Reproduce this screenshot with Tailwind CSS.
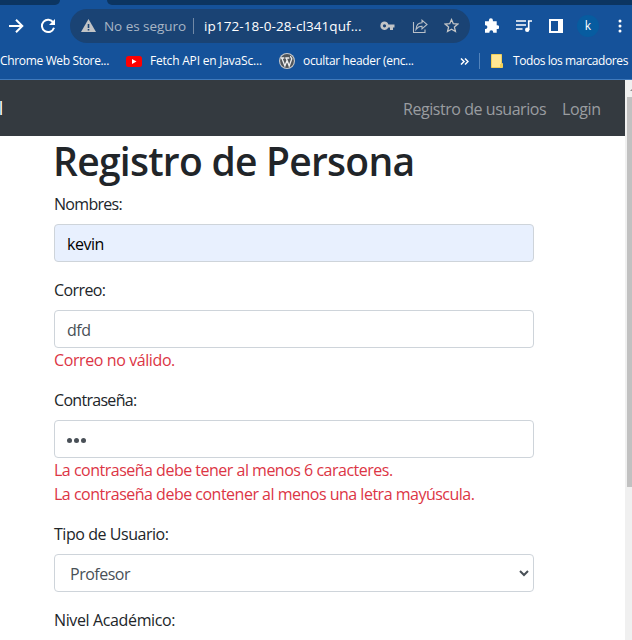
<!DOCTYPE html>
<html lang="es">
<head>
<meta charset="utf-8">
<title>Registro de Persona</title>
<script src="https://cdn.jsdelivr.net/npm/@tailwindcss/browser@4"></script>
</head>
<body class="w-[632px] h-[640px] overflow-hidden bg-white font-['Open_Sans','Noto_Sans',sans-serif] text-[#212529]">
<header class="h-20 flex flex-col bg-[#15529a] border-b border-[#3f79bb] text-white">
  <div class="flex h-[5px] shrink-0 justify-between">
    <div class="w-[60px] bg-[#0c3561] rounded-br-[5px]"></div>
    <div class="w-[525px] bg-[#0c3561] rounded-bl-[5px]"></div>
  </div>
  <div class="flex h-[42px] shrink-0 items-center">
    <svg class="w-4 h-4 ml-2" viewBox="0 0 16 16" fill="none" stroke="#fff" stroke-width="2"><path d="M1 8h13M8 1.700 14.300 8 8 14.300"/></svg>
    <svg class="w-4 h-4 ml-4" viewBox="0 0 16 16"><path d="M13.300 4.500A6.200 6.200 0 1 0 14 9.800" fill="none" stroke="#fff" stroke-width="2"/><path d="M15 1v6H9z" fill="#fff"/></svg>
    <div class="flex items-center w-[400px] h-[34px] ml-[14px] rounded-full bg-[#1a4374]">
      <svg class="w-[15px] h-[14px] ml-[11px]" viewBox="0 0 15 14"><path d="M7.500 0 15 13H0z" fill="#c2c4c6"/><path d="M6.700 5h1.600v4H6.700zM6.700 10h1.600v1.600H6.700z" fill="#1a4374"/></svg>
      <span class="ml-[8px] w-[89px] whitespace-nowrap text-[13.5px] tracking-[-0.05px] text-[#a8b5c5]">No es seguro</span>
      <span class="h-4 w-px bg-[#7189a6]"></span>
      <span class="ml-[10px] w-[176px] whitespace-nowrap text-[13.5px] tracking-[0.08px]">ip172-18-0-28-cl341quf...</span>
      <svg class="w-[15px] h-[10px]" viewBox="0 0 15 10" fill="#c2c4c6"><path fill-rule="evenodd" d="M4.500.500a4.200 4.200 0 1 0 3.900 6H10V9h3V6.500h1.500v-3H8.400A4.200 4.200 0 0 0 4.500.500zM4.500 3.200a1.600 1.600 0 1 1 0 3.200 1.600 1.600 0 0 1 0-3.200z"/></svg>
      <svg class="w-4 h-4 ml-[17px]" viewBox="0 0 16 16" fill="none" stroke="#b9c0c8" stroke-width="1.100"><path d="M1.500 4v10.500h11.500v-3M4 11.500c.3-4.800 2.600-6.700 6-6.700V2.200l5 4.300-5 4.300V8.300c-2.800-.1-4.600 1.200-6 3.200z"/></svg>
      <svg class="w-[15px] h-[15px] ml-[16px] -mt-px" viewBox="0 0 16 16" fill="none" stroke="#c2c4c6" stroke-width="1.400"><path d="m8 1.700 1.900 4.400 4.800.4-3.600 3.200 1.100 4.700L8 11.900l-4.200 2.500 1.100-4.700L1.300 6.500l4.800-.4z"/></svg>
    </div>
    <svg class="w-[15px] h-[15px] ml-[14px] -mt-px" viewBox="0 0 15 15" fill="#fff"><path d="M1 3.200h3.900V2.300a2 2 0 0 1 4 0v.9h3.800v4h.6a1.900 1.900 0 0 1 0 3.800h-.6v3.800H9.200v-.6a1.900 1.900 0 0 0-3.800 0v.6H1V11h.5a1.900 1.900 0 0 0 0-3.800H1z"/></svg>
    <svg class="w-4 h-[14px] ml-[17px]" viewBox="0 0 16 14"><path d="M0 2h10M0 6h10M0 10h6.500M12.700 11V2H16" fill="none" stroke="#fff" stroke-width="1.600"/><circle cx="11.200" cy="10.800" r="2.200" fill="#fff"/></svg>
    <svg class="w-[14px] h-[14px] ml-[17px]" viewBox="0 0 14 14"><path fill="#fff" fill-rule="evenodd" d="M0 0h14v14H0zM2 2v10h7V2z"/></svg>
    <span class="flex w-[22px] h-[22px] ml-[14px] items-center justify-center rounded-full bg-[#075ca0] text-xs">k</span>
    <svg class="w-1 h-[14px] ml-5 -translate-x-px" viewBox="0 0 4 14" fill="#fff"><circle cx="2" cy="2" r="1.500"/><circle cx="2" cy="7" r="1.500"/><circle cx="2" cy="12" r="1.500"/></svg>
  </div>
  <div class="flex h-7 items-center whitespace-nowrap text-[12px] tracking-[-0.34px]">
    <span class="w-[126px]">Chrome Web Store...</span>
    <svg class="w-4 h-[11px]" viewBox="0 0 16 11"><rect width="16" height="11" rx="2.500" fill="#f00"/><path d="m6 3 4.500 2.500L6 8z" fill="#fff"/></svg>
    <span class="w-[129px] ml-2 tracking-[-0.2px]">Fetch API en JavaSc...</span>
    <svg class="w-4 h-4" viewBox="0 0 16 16"><circle cx="8" cy="8" r="8" fill="#c8c8c8"/><circle cx="8" cy="8" r="6.900" fill="#50555a"/><path d="M1.800 5h3.500M6.300 5h4M2.800 5l3.100 8L8 7.500M7.200 5l3 8 2.600-7.200c-.2-1-1.500-1.500-1.200-2.800" fill="none" stroke="#eee" stroke-width="1.300"/></svg>
    <span class="w-[157px] ml-2">ocultar header (enc...</span>
    <svg class="w-[9px] h-[7px]" viewBox="0 0 9 7" fill="none" stroke="#fff" stroke-width="1.500"><path d="m1 .5 3 3-3 3M5 .5l3 3-3 3"/></svg>
    <span class="h-4 w-px ml-[10px] bg-[#5283bb]"></span>
    <svg class="w-3 h-[14px] ml-[11px]" viewBox="0 0 12 14"><path d="M.5.500h10v9h1v4H.5z" fill="#ffe694" stroke="#f0cf58"/><path d="M9 10h2v3H9z" fill="#f3cf55"/></svg>
    <span class="ml-[10px] tracking-[-0.42px]">Todos los marcadores</span>
  </div>
</header>
<div class="flex h-[560px]">
  <div class="w-[625px] shrink-0 overflow-hidden">
    <nav class="flex h-14 items-center bg-[#343a40] text-[#9a9da0]">
      <div class="flex w-[2px] h-[30px] items-center justify-center text-lg leading-[30px] text-white">l</div>
      <a class="ml-[401px] w-[159px] pt-px whitespace-nowrap text-base tracking-[-0.45px]">Registro de usuarios</a>
      <a class="pt-px text-base tracking-[-0.35px]">Login</a>
    </nav>
    <main class="w-[480px] ml-[54px] leading-6 tracking-[-0.5px]">
      <h1 class="mb-2 pt-px h-12 -ml-px whitespace-nowrap text-[39px] leading-[48px] font-semibold tracking-[-0.74px]">Registro de Persona</h1>
      <div class="mb-4">
        <label class="block mb-2 tracking-[-0.7px]">Nombres:</label>
        <div class="h-[38px] px-3 py-[7px] rounded border border-[#ced4da] bg-[#e8f0fe] text-black">kevin</div>
      </div>
      <div class="mb-4">
        <label class="block mb-2 tracking-[-0.6px]">Correo:</label>
        <div class="h-[38px] px-3 py-[7px] rounded border border-[#ced4da] text-[#495057]">dfd</div>
        <p class="text-[#dc3545] tracking-[-0.4px]">Correo no válido.</p>
      </div>
      <div class="mb-4">
        <label class="block mb-2 tracking-[-0.7px]">Contraseña:</label>
        <div class="flex h-[38px] items-center gap-[2px] px-[12px] pt-[3px] rounded border border-[#ced4da]">
          <i class="size-[5px] rounded-full bg-[#495057]"></i><i class="size-[5px] rounded-full bg-[#495057]"></i><i class="size-[5px] rounded-full bg-[#495057]"></i>
        </div>
        <p class="whitespace-nowrap text-[#dc3545]">La contraseña debe tener al menos 6 caracteres.</p>
        <p class="whitespace-nowrap text-[#dc3545]">La contraseña debe contener al menos una letra mayúscula.</p>
      </div>
      <div class="mb-4">
        <label class="block mb-2 tracking-[-0.45px]">Tipo de Usuario:</label>
        <div class="flex h-[38px] items-center justify-between pl-[15px] pr-1 pt-[2px] rounded border border-[#ced4da] text-[#495057]">Profesor
          <svg class="w-[10px] h-[7px] -mt-[2px]" viewBox="0 0 10 7" fill="none" stroke="#495057" stroke-width="2"><path d="m1 1 4 4 4-4"/></svg>
        </div>
      </div>
      <label class="block tracking-[-0.37px]">Nivel Académico:</label>
    </main>
  </div>
  <div class="w-[7px] shrink-0 overflow-hidden bg-[#f0f0f0]">
    <svg class="w-[7px] h-[17px]" viewBox="0 0 7 17"><path d="m5 11 4-4v4z" fill="#8b8b8b"/></svg>
    <div class="ml-[2px] w-[5px] h-[390px] bg-[#c1c1c1]"></div>
  </div>
</div>
</body>
</html>
